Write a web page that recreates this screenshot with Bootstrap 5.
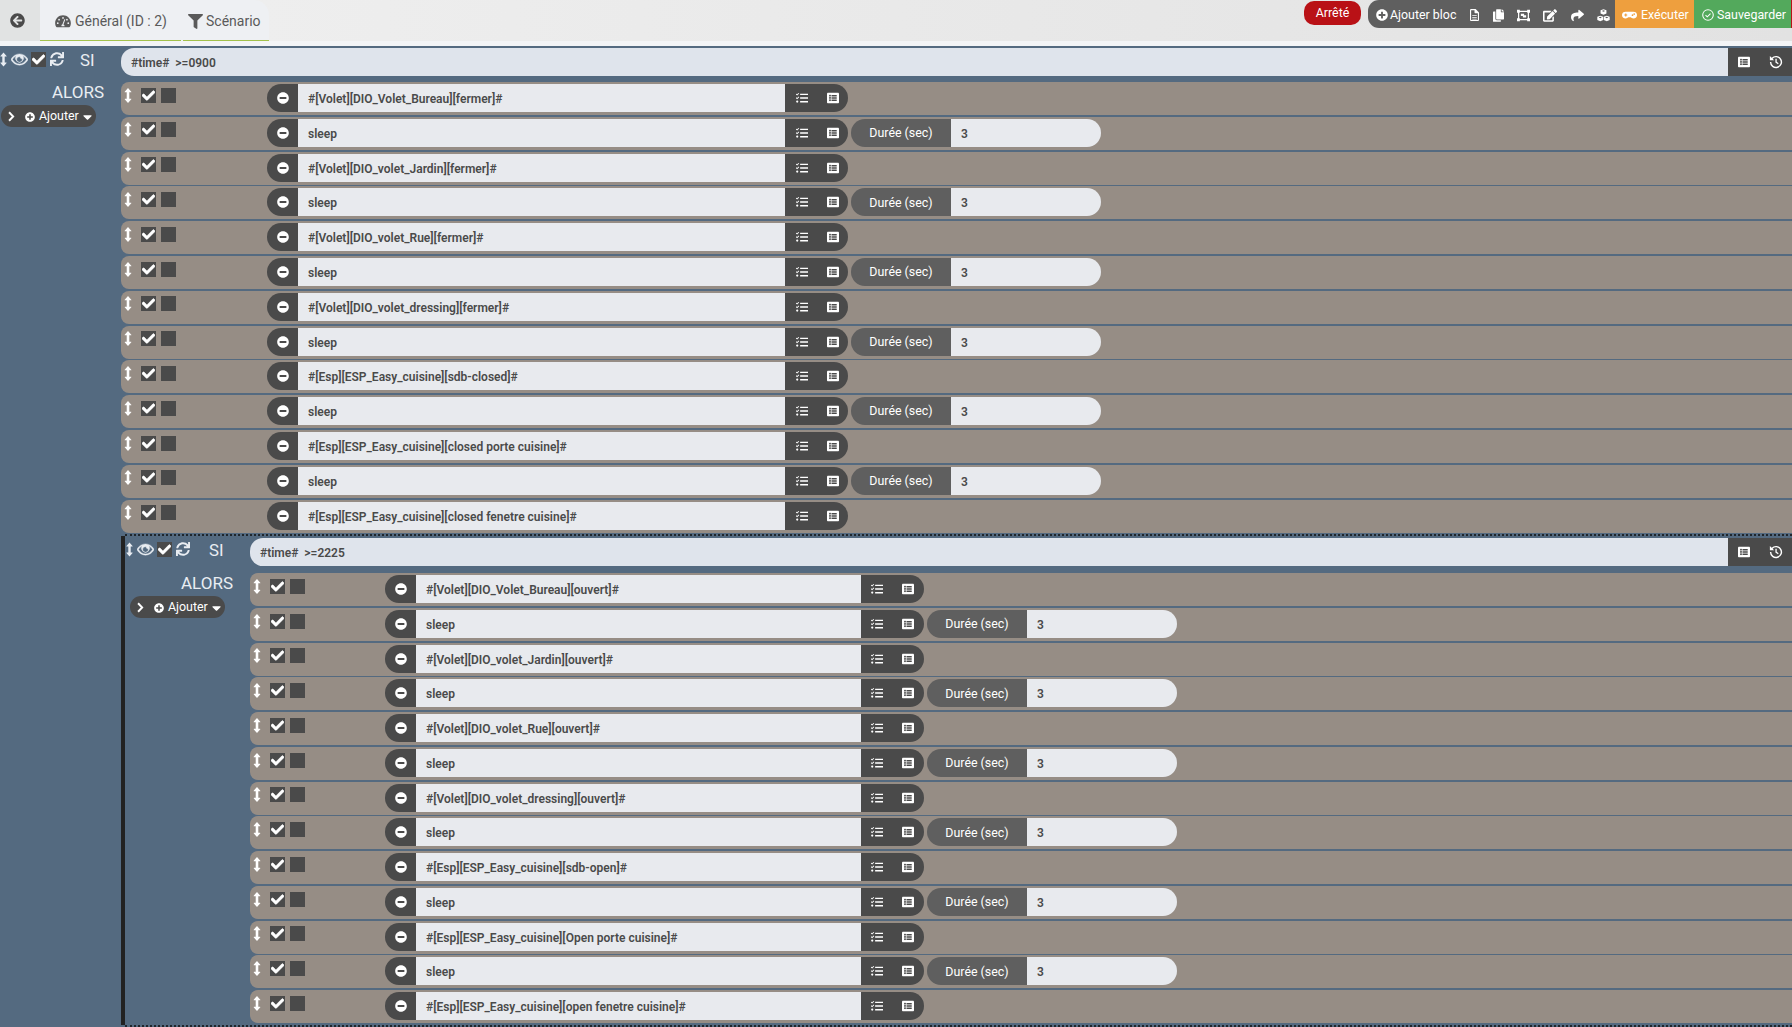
<!DOCTYPE html>
<html lang="fr"><head><meta charset="utf-8"><title>Scénario</title>
<link href="https://cdn.jsdelivr.net/npm/bootstrap@5.3.0/dist/css/bootstrap.min.css" rel="stylesheet">
<style>
html,body{height:100%;overflow:hidden}
body{background:#f3f4f6;font-family:Roboto,"Liberation Sans",sans-serif;color:#4a4a4a;font-size:13px}
svg.ic{fill:currentColor;display:block;flex:none}
.topb{height:41px;background:linear-gradient(90deg,#f0f0f0,#e2e2e2);margin-bottom:5px}
.backb{width:40px;height:41px;background:#e1e3e3;color:#4a4a4a;padding-left:10px}
.tabz{background:#eef0f3;height:41px;border-top-right-radius:15px;font-size:14px;color:#5a5a5a}
.tabi{height:41px;border-bottom:1px solid #a3c14c;padding-top:2px}
.tabi1{width:141px;padding-left:15px}
.tabi2{width:86px;margin-left:2px;padding-left:5px;border-top-right-radius:15px}
.tabi2.gap-1{gap:3px!important}
.stat{width:57px;height:24px;margin-top:1px;margin-right:7px;padding-top:1px;background:#b91116;color:#fff;border-radius:10px;font-size:12.4px}
.tbar{height:28px;width:424px;background:#5f5f5f;color:#fff;border-radius:11px 0 0 11px;font-size:12.4px}
.tadd{width:247px;padding-left:8px;padding-top:2px}
.tadd .lbl{margin-left:2px;margin-right:7px;width:66px;white-space:nowrap}
.tslot{width:24px;justify-content:center}
.tslot:nth-child(5){width:26px}
.tslot:nth-child(6){width:27px}
.tslot:nth-child(7){width:28px}
.texe{width:79px;background:#ee9f3e;padding-left:7px;gap:4px;padding-top:2px}
.tsav{width:98px;background:#53a95c;padding-left:8px;gap:3px;border-right:1px solid #b91116;padding-top:2px}
.blkA{background:#546a80;display:grid;grid-template-columns:121px 1fr;--off:146px;--inp:487px;--dur:150px;--nudge:0px;--pill:1px;--gbp:11px;height:981px}
.bin{margin-left:4px;margin-top:-.2px;border-top:2px dotted #20262c;border-bottom:2px dotted #20262c}
.blkB{display:grid;grid-template-columns:125px 1fr;margin-left:-4px;border-left:4px solid #222;--off:135px;--inp:445px;--dur:150px;--nudge:3px;--pill:5px;--gbp:10px}
.leftc{color:#e9edf2}
.hd{height:36px;padding-top:6px;padding-left:var(--nudge)}
.blkB .hd{padding-left:1px}
.eye{margin-left:4px;margin-right:3px}
.sync{margin-left:4px}
.silbl{font-size:16.8px;font-weight:400;line-height:17px;margin-left:calc(16px + var(--nudge))}
.alors{font-size:17px;font-weight:400;text-align:right;line-height:20px;padding-right:17px}
.blkB .alors{padding-top:1px}
.addp{width:95px;height:22px;background:#4a4a4a;color:#fff;border-radius:11px;margin-top:3px;margin-left:var(--pill);font-size:12.4px;padding-left:6px;padding-top:1px}
.addp .t{margin-left:4px;margin-right:4px}
.addp .chv{margin-right:10px}
.cb{width:15px;height:15px;background:#4a4a4a;color:#fff;display:flex;align-items:center;justify-content:center;flex:none}
.sihd{height:28px;margin-top:2px;margin-bottom:6px;flex-wrap:nowrap}
.blkB .sihd{margin-bottom:7px}
.input-group>.ftx{border:0;background:#e8eaee;font-size:12px;font-weight:600;color:#4a4a4a;padding:1px 0 0 10px;line-height:28px;height:28px;box-shadow:none;margin:0!important;white-space:nowrap;min-height:0;border-radius:0!important}
.input-group>.fc{width:var(--inp);flex:none}
.input-group>.fs{background:#dfe4ec;border-radius:13px 0 0 13px!important;white-space:pre}
.input-group>.sibtn{width:64px;background:#4a4a4a;color:#fff;gap:19px;border:0;border-radius:0!important;margin:0!important;padding:0 0 0 10px}
.arow{height:33px;margin-bottom:1.8px;background:#968d85;border-radius:8px 0 0 8px;padding-top:2px}
.blkB .arow{margin-bottom:1.75px}
.rtools{width:var(--off);flex:none;gap:5px;padding-left:3px;padding-top:3.6px;color:#fff;height:28px}
.rtools .mv{margin-right:4px}
.igrp{width:auto;flex-wrap:nowrap;height:28px}
.input-group>.ga{width:31px;background:#4a4a4a;border:0;border-radius:14px 0 0 14px!important;color:#fff;padding:0;justify-content:center}
.input-group>.gb{width:63px;background:#4a4a4a;border:0;border-radius:0 14px 14px 0!important;color:#fff;padding:0 0 0 var(--gbp);gap:19px;margin:0!important}
.input-group>.gd{width:100px;background:#5f5f5f;border:0;border-radius:14px 0 0 14px!important;color:#fff;font-size:12.4px;padding:1px 0 0;justify-content:center;margin:0 0 0 3px!important}
.input-group>.fd{width:var(--dur);flex:none;border-radius:0 14px 14px 0!important}
</style></head><body>
<svg width="0" height="0" class="position-absolute"><defs>
<symbol id="i-back" viewBox="0 0 512 512"><path d="M256 504C119 504 8 393 8 256S119 8 256 8s248 111 248 248-111 248-248 248zm28.9-143.6L209.4 288H392c13.3 0 24-10.7 24-24v-16c0-13.3-10.7-24-24-24H209.4l75.5-72.4c9.7-9.3 9.9-24.8.4-34.3l-11-10.9c-9.4-9.4-24.6-9.4-33.9 0L107.7 239c-9.4 9.4-9.4 24.6 0 33.9l132.7 132.7c9.4 9.4 24.6 9.4 33.9 0l11-10.9c9.5-9.5 9.3-25-.4-34.3z"/></symbol>
<symbol id="i-gauge" viewBox="0 0 576 512"><path fill-rule="evenodd" d="M288 48C129 48 0 177 0 336c0 50 14 94 36 130 6 9 15 14 26 14h452c11 0 20-5 26-14 22-36 36-80 36-130C576 177 447 48 288 48zm0 64a32 32 0 1 1 0 64 32 32 0 0 1 0-64zM96 368a32 32 0 1 1 0-64 32 32 0 0 1 0 64zm48-128a32 32 0 1 1 0-64 32 32 0 0 1 0 64zm200 212H232a64 64 0 0 1 36-78l66-174c4-10 15-15 25-11s15 15 11 25l-66 172c25 9 43 33 43 61 0 2-1 3-3 5zm88-212a32 32 0 1 1 0-64 32 32 0 0 1 0 64zm48 128a32 32 0 1 1 0-64 32 32 0 0 1 0 64z"/></symbol>
<symbol id="i-filter" viewBox="0 0 512 512"><path d="M487.976 0H24.028C2.71 0-8.047 25.866 7.058 40.971L192 225.941V432c0 7.831 3.821 15.17 10.237 19.662l80 55.98C298.02 518.69 320 507.493 320 487.98V225.941l184.947-184.97C520.021 25.896 509.338 0 487.976 0z"/></symbol>
<symbol id="i-plus" viewBox="0 0 512 512"><path d="M256 8C119 8 8 119 8 256s111 248 248 248 248-111 248-248S393 8 256 8zm144 276c0 6.6-5.4 12-12 12h-92v92c0 6.6-5.4 12-12 12h-56c-6.6 0-12-5.4-12-12v-92h-92c-6.6 0-12-5.4-12-12v-56c0-6.6 5.4-12 12-12h92v-92c0-6.6 5.4-12 12-12h56c6.6 0 12 5.4 12 12v92h92c6.6 0 12 5.4 12 12v56z"/></symbol>
<symbol id="i-minus" viewBox="0 0 512 512"><path d="M256 8C119 8 8 119 8 256s111 248 248 248 248-111 248-248S393 8 256 8zM124 296c-6.6 0-12-5.4-12-12v-56c0-6.6 5.4-12 12-12h264c6.6 0 12 5.4 12 12v56c0 6.6-5.4 12-12 12H124z"/></symbol>
<symbol id="i-file" viewBox="0 0 384 512"><path fill-rule="evenodd" d="M48 0h192l144 144v320a48 48 0 0 1-48 48H48a48 48 0 0 1-48-48V48A48 48 0 0 1 48 0zm0 48v416h288V176H216a24 24 0 0 1-24-24V48H48zm48 208h192v36H96zm0 80h192v36H96zm0 80h192v36H96z"/></symbol>
<symbol id="i-copy" viewBox="0 0 448 512"><path d="M320 448v40c0 13-11 24-24 24H24c-13 0-24-11-24-24V120c0-13 11-24 24-24h72v296c0 31 25 56 56 56h168zm0-344V0H152c-13 0-24 11-24 24v368c0 13 11 24 24 24h272c13 0 24-11 24-24V128H344c-13 0-24-11-24-24zm121-31L375 7a24 24 0 0 0-17-7h-6v96h96v-6c0-6-3-12-7-17z"/></symbol>
<symbol id="i-vec" viewBox="0 0 512 512"><path fill-rule="evenodd" d="M0 32h112v40h288V32h112v112h-40v224h40v112H400v-40H112v40H0V368h40V144H0V32zm112 88v24H88v224h24v24h288v-24h24V144h-24v-24H112zm40 64h128v64h80v88H232v-64h-80z"/></symbol>
<symbol id="i-edit" viewBox="0 0 576 512"><path d="M402.6 83.2l90.2 90.2c3.8 3.8 3.8 10 0 13.8L274.4 405.6l-92.8 10.3c-12.4 1.4-22.9-9.1-21.5-21.5l10.3-92.8L388.8 83.2c3.8-3.8 10-3.8 13.8 0zm162-22.9l-48.8-48.8c-15.2-15.2-39.9-15.2-55.2 0l-35.4 35.4c-3.8 3.8-3.8 10 0 13.8l90.2 90.2c3.8 3.8 10 3.8 13.8 0l35.4-35.4c15.2-15.3 15.2-40 0-55.2zM384 346.2V448H64V128h229.8c3.2 0 6.2-1.3 8.5-3.5l40-40c7.6-7.6 2.2-20.5-8.5-20.5H48C21.5 64 0 85.5 0 112v352c0 26.5 21.5 48 48 48h352c26.5 0 48-21.5 48-48V306.2c0-10.7-12.9-16-20.5-8.5l-40 40c-2.2 2.3-3.5 5.3-3.5 8.5z"/></symbol>
<symbol id="i-share" viewBox="0 0 512 512"><path d="M503.691 189.836L327.687 37.851C312.281 24.546 288 35.347 288 56.015v80.053C127.371 137.907 0 170.1 0 322.326c0 61.441 39.581 122.309 83.333 154.132 13.653 9.931 33.111-2.533 28.077-18.631C66.066 312.814 132.917 274.316 288 272.085V360c0 20.7 24.3 31.453 39.687 18.164l176.004-152c11.071-9.562 11.086-26.753 0-36.328z"/></symbol>
<symbol id="i-cubes" viewBox="0 0 512 512"><path fill-rule="evenodd" d="M256 8l116 46v120l-116 48-116-48V54zm0 46l-64 24 64 26 64-26zM128 264l116 46v120l-116 48L12 430V310zm0 46l-64 24 64 26 64-26zm256-46l116 46v120l-116 48-116-48V310zm0 46l-64 24 64 26 64-26z"/></symbol>
<symbol id="i-game" viewBox="0 0 640 512"><path fill-rule="evenodd" d="M160 112h320a160 144 0 0 1 0 288c-44 0-84-18-113-48h-94c-29 30-69 48-113 48a160 144 0 0 1 0-288zm-24 80v40H96v48h40v40h48v-40h40v-48h-40v-40zm312 36a36 36 0 1 0 0 72 36 36 0 0 0 0-72zm72-48a36 36 0 1 0 0 72 36 36 0 0 0 0-72z"/></symbol>
<symbol id="i-okc" viewBox="0 0 512 512"><circle cx="256" cy="256" r="226" fill="none" stroke="currentColor" stroke-width="44"/><path d="M150 262l74 74 140-140" fill="none" stroke="currentColor" stroke-width="44"/></symbol>
<symbol id="i-ck" viewBox="0 0 512 512"><path stroke="currentColor" stroke-width="24" d="M173.898 439.404l-166.4-166.4c-9.997-9.997-9.997-26.206 0-36.204l36.203-36.204c9.997-9.998 26.207-9.998 36.204 0L192 312.69 432.095 72.596c9.997-9.997 26.207-9.997 36.204 0l36.203 36.204c9.997 9.997 9.997 26.206 0 36.204l-294.4 294.401c-9.998 9.997-26.207 9.997-36.204-.001z"/></symbol>
<symbol id="i-mv" viewBox="0 0 256 512"><path d="M128 0l112 124c8 9 2 24-10 24h-58v216h58c12 0 18 15 10 24L128 512 16 388c-8-9-2-24 10-24h58V148H26c-12 0-18-15-10-24z"/></symbol>
<symbol id="i-eye" viewBox="0 0 576 512"><path stroke="currentColor" stroke-width="14" fill-rule="evenodd" d="M572.5 241.4C518.3 135.6 410.9 64 288 64S57.7 135.6 3.5 241.4a32 32 0 0 0 0 29.2C57.7 376.4 165.1 448 288 448s230.3-71.6 284.5-177.4a32 32 0 0 0 0-29.2zM288 408c-100 0-190-60-240-152 30-55 75-100 132-125a136 136 0 1 0 216 0c57 25 102 70 132 125-50 92-140 152-240 152zm0-248a96 96 0 1 0 96 96c0-10-2-20-5-29a48 48 0 0 1-62-62c-9-3-19-5-29-5z"/></symbol>
<symbol id="i-sync" viewBox="0 0 512 512"><path d="M440.65 12.57l4 82.77A247.16 247.16 0 0 0 255.83 8C134.73 8 33.91 94.92 12.29 209.82A12 12 0 0 0 24.09 224h49.05a12 12 0 0 0 11.67-9.26 175.91 175.91 0 0 1 317-56.94l-101.46-4.86a12 12 0 0 0-12.57 12v47.41a12 12 0 0 0 12 12H500a12 12 0 0 0 12-12V12a12 12 0 0 0-12-12h-47.37a12 12 0 0 0-11.98 12.57zM255.83 432a175.61 175.61 0 0 1-146-77.8l101.8 4.87a12 12 0 0 0 12.57-12v-47.4a12 12 0 0 0-12-12H12a12 12 0 0 0-12 12V500a12 12 0 0 0 12 12h47.35a12 12 0 0 0 12-12.6l-4.15-82.57A247.17 247.17 0 0 0 255.83 504c121.11 0 221.93-86.92 243.55-201.82a12 12 0 0 0-11.8-14.18h-49.05a12 12 0 0 0-11.67 9.26A175.86 175.86 0 0 1 255.83 432z"/></symbol>
<symbol id="i-chev" viewBox="0 0 320 512"><path d="M70 60l190 196L70 452" fill="none" stroke="currentColor" stroke-width="90"/></symbol>
<symbol id="i-caret" viewBox="0 0 320 512"><path d="M31.3 192h257.3c17.8 0 26.7 21.5 14.1 34.1L174.1 354.8c-7.8 7.8-20.5 7.8-28.3 0L17.2 226.1C4.6 213.5 13.5 192 31.3 192z"/></symbol>
<symbol id="i-task" viewBox="0 0 512 512"><path d="M176 72h336v60H176zm0 156h336v60H176zm0 156h336v60H176zM20 70l28 28 60-60 28 28-88 88-56-56zm0 156l28 28 60-60 28 28-88 88-56-56zM52 360a48 48 0 1 1 0 96 48 48 0 0 1 0-96z"/></symbol>
<symbol id="i-list" viewBox="0 0 512 512"><path d="M464 480H48c-26.51 0-48-21.49-48-48V80c0-26.51 21.49-48 48-48h416c26.51 0 48 21.49 48 48v352c0 26.51-21.49 48-48 48zM128 120c-22.091 0-40 17.909-40 40s17.909 40 40 40 40-17.909 40-40-17.909-40-40-40zm0 96c-22.091 0-40 17.909-40 40s17.909 40 40 40 40-17.909 40-40-17.909-40-40-40zm0 96c-22.091 0-40 17.909-40 40s17.909 40 40 40 40-17.909 40-40-17.909-40-40-40zm288-136v-32c0-6.627-5.373-12-12-12H204c-6.627 0-12 5.373-12 12v32c0 6.627 5.373 12 12 12h200c6.627 0 12-5.373 12-12zm0 96v-32c0-6.627-5.373-12-12-12H204c-6.627 0-12 5.373-12 12v32c0 6.627 5.373 12 12 12h200c6.627 0 12-5.373 12-12zm0 96v-32c0-6.627-5.373-12-12-12H204c-6.627 0-12 5.373-12 12v32c0 6.627 5.373 12 12 12h200c6.627 0 12-5.373 12-12z"/></symbol>
<symbol id="i-hist" viewBox="0 0 512 512"><path d="M96 100a224 224 0 1 1-64 156h52a172 172 0 1 0 49-120l53 53H32V32z"/><path d="M234 136h48v112l72 54-28 38-92-70z"/></symbol>
</defs></svg>

<template id="tpl-tools"><div class="rtools d-flex"><svg class="ic mv" width="8" height="15"><use href="#i-mv"/></svg><span class="cb"><svg class="ic" width="13" height="13"><use href="#i-ck"/></svg></span><span class="cb"></span></div></template>

<header class="topb d-flex">
<div class="backb d-flex align-items-center"><svg class="ic" width="15" height="15"><use href="#i-back"/></svg></div>
<nav class="tabz d-flex">
<div class="tabi tabi1 d-flex align-items-center gap-1"><svg class="ic" width="16" height="14"><use href="#i-gauge"/></svg>Général (ID : 2)</div>
<div class="tabi tabi2 d-flex align-items-center gap-1"><svg class="ic" width="15" height="15"><use href="#i-filter"/></svg>Scénario</div>
</nav>
<div class="stat ms-auto d-flex align-items-center justify-content-center">Arrêté</div>
<div class="tbar d-flex">
<div class="tadd d-flex align-items-center"><svg class="ic" width="12" height="12"><use href="#i-plus"/></svg><span class="lbl">Ajouter bloc</span><span class="tslot d-flex"><svg class="ic" width="9" height="12"><use href="#i-file"/></svg></span><span class="tslot d-flex"><svg class="ic" width="11" height="13"><use href="#i-copy"/></svg></span><span class="tslot d-flex"><svg class="ic" width="13" height="13"><use href="#i-vec"/></svg></span><span class="tslot d-flex"><svg class="ic" width="14" height="13"><use href="#i-edit"/></svg></span><span class="tslot d-flex"><svg class="ic" width="13" height="13"><use href="#i-share"/></svg></span><span class="tslot d-flex"><svg class="ic" width="13" height="13"><use href="#i-cubes"/></svg></span></div>
<div class="texe d-flex align-items-center"><svg class="ic" width="15" height="12"><use href="#i-game"/></svg>Exécuter</div>
<div class="tsav d-flex align-items-center"><svg class="ic" width="12" height="12"><use href="#i-okc"/></svg>Sauvegarder</div>
</div>
</header>

<main class="blkA">
<div class="leftc"><div class="hd d-flex"><svg class="ic" width="7" height="15"><use href="#i-mv"/></svg><svg class="ic eye" width="17" height="15"><use href="#i-eye"/></svg><span class="cb"><svg class="ic" width="13" height="13"><use href="#i-ck"/></svg></span><svg class="ic sync" width="14" height="14"><use href="#i-sync"/></svg><span class="silbl">SI</span></div><div class="alors">ALORS</div><div class="addp d-flex align-items-center"><svg class="ic chv" width="8" height="11"><use href="#i-chev"/></svg><svg class="ic" width="10" height="10"><use href="#i-plus"/></svg><span class="t">Ajouter</span><svg class="ic" width="9" height="14"><use href="#i-caret"/></svg></div></div>
<div id="acts-a">
<div class="input-group sihd"><div class="form-control ftx fs">#time#  &gt;=0900</div><span class="input-group-text sibtn"><svg class="ic" width="12" height="12"><use href="#i-list"/></svg><svg class="ic" width="14" height="14"><use href="#i-hist"/></svg></span></div>
<div class="arow d-flex" data-t="#[Volet][DIO_Volet_Bureau][fermer]#"></div>
<div class="arow d-flex" data-s></div>
<div class="arow d-flex" data-t="#[Volet][DIO_volet_Jardin][fermer]#"></div>
<div class="arow d-flex" data-s></div>
<div class="arow d-flex" data-t="#[Volet][DIO_volet_Rue][fermer]#"></div>
<div class="arow d-flex" data-s></div>
<div class="arow d-flex" data-t="#[Volet][DIO_volet_dressing][fermer]#"></div>
<div class="arow d-flex" data-s></div>
<div class="arow d-flex" data-t="#[Esp][ESP_Easy_cuisine][sdb-closed]#"></div>
<div class="arow d-flex" data-s></div>
<div class="arow d-flex" data-t="#[Esp][ESP_Easy_cuisine][closed porte cuisine]#"></div>
<div class="arow d-flex" data-s></div>
<div class="arow d-flex" data-t="#[Esp][ESP_Easy_cuisine][closed fenetre cuisine]#"></div>
<div class="bin"><section class="blkB">
<div class="leftc"><div class="hd d-flex"><svg class="ic" width="7" height="15"><use href="#i-mv"/></svg><svg class="ic eye" width="17" height="15"><use href="#i-eye"/></svg><span class="cb"><svg class="ic" width="13" height="13"><use href="#i-ck"/></svg></span><svg class="ic sync" width="14" height="14"><use href="#i-sync"/></svg><span class="silbl">SI</span></div><div class="alors">ALORS</div><div class="addp d-flex align-items-center"><svg class="ic chv" width="8" height="11"><use href="#i-chev"/></svg><svg class="ic" width="10" height="10"><use href="#i-plus"/></svg><span class="t">Ajouter</span><svg class="ic" width="9" height="14"><use href="#i-caret"/></svg></div></div>
<div>
<div class="input-group sihd"><div class="form-control ftx fs">#time#  &gt;=2225</div><span class="input-group-text sibtn"><svg class="ic" width="12" height="12"><use href="#i-list"/></svg><svg class="ic" width="14" height="14"><use href="#i-hist"/></svg></span></div>
<div class="arow d-flex" data-t="#[Volet][DIO_Volet_Bureau][ouvert]#"></div>
<div class="arow d-flex" data-s></div>
<div class="arow d-flex" data-t="#[Volet][DIO_volet_Jardin][ouvert]#"></div>
<div class="arow d-flex" data-s></div>
<div class="arow d-flex" data-t="#[Volet][DIO_volet_Rue][ouvert]#"></div>
<div class="arow d-flex" data-s></div>
<div class="arow d-flex" data-t="#[Volet][DIO_volet_dressing][ouvert]#"></div>
<div class="arow d-flex" data-s></div>
<div class="arow d-flex" data-t="#[Esp][ESP_Easy_cuisine][sdb-open]#"></div>
<div class="arow d-flex" data-s></div>
<div class="arow d-flex" data-t="#[Esp][ESP_Easy_cuisine][Open porte cuisine]#"></div>
<div class="arow d-flex" data-s></div>
<div class="arow d-flex" data-t="#[Esp][ESP_Easy_cuisine][open fenetre cuisine]#"></div>
</div>
</section></div>
</div>
</main>
<script>
// every action row has the same controls: drag handle, two toggles, then its input group
const ic=(n,w,h)=>`<svg class="ic" width="${w}" height="${h}"><use href="#i-${n}"/></svg>`;
const tools=document.getElementById('tpl-tools').innerHTML;
document.querySelectorAll('.arow').forEach(r=>{
  const sleep=r.hasAttribute('data-s');
  r.innerHTML=tools+`<div class="input-group igrp"><span class="input-group-text ga">${ic('minus',12,12)}</span><div class="form-control ftx fc">${sleep?'sleep':r.dataset.t}</div><span class="input-group-text gb">${ic('task',12,12)}${ic('list',12,12)}</span>`+(sleep?`<span class="input-group-text gd">Durée (sec)</span><div class="form-control ftx fd">3</div>`:'')+`</div>`;
});
</script>
<script src="https://cdn.jsdelivr.net/npm/bootstrap@5.3.0/dist/js/bootstrap.bundle.min.js"></script>
</body></html>
